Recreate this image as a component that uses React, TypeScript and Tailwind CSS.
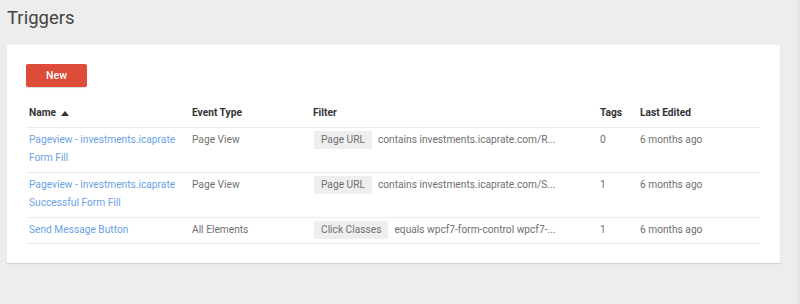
import React from "react";

interface TriggerRow {
  name: string[];
  eventType: string;
  chip: string;
  filter: string;
  tags: number;
  edited: string;
}

const rows: TriggerRow[] = [
  {
    name: ["Pageview - investments.icaprate", "Form Fill"],
    eventType: "Page View",
    chip: "Page URL",
    filter: "contains investments.icaprate.com/R...",
    tags: 0,
    edited: "6 months ago",
  },
  {
    name: ["Pageview - investments.icaprate", "Successful Form Fill"],
    eventType: "Page View",
    chip: "Page URL",
    filter: "contains investments.icaprate.com/S...",
    tags: 1,
    edited: "6 months ago",
  },
  {
    name: ["Send Message Button"],
    eventType: "All Elements",
    chip: "Click Classes",
    filter: "equals wpcf7-form-control wpcf7-...",
    tags: 1,
    edited: "6 months ago",
  },
];

const App: React.FC = () => {
  return (
    <div
      className="w-[800px] h-[304px] bg-[#ededed] relative overflow-hidden"
      style={{ fontFamily: 'Roboto, "Liberation Sans", sans-serif' }}
    >
      {/* Titre */}
      <h1 className="pl-[7px] pt-[4px] h-[45px] text-[18.5px] leading-[28px] text-[#444] font-normal">
        Triggers
      </h1>

      {/* Carte */}
      <div className="ml-[7px] w-[773px] h-[218px] bg-white shadow-[0_1px_1px_rgba(0,0,0,0.12)] pt-[17px] pl-[19px] pr-[20px]">
        <button className="w-[61px] h-[23px] bg-[#dd4b39] text-white text-[10.5px] font-medium rounded-[2px] shadow-[0_1px_1px_rgba(0,0,0,0.15)]">
          New
        </button>

        <table className="mt-[14px] w-[734px] table-fixed border-collapse text-[10.2px] leading-[18.5px]">
          <colgroup>
            <col className="w-[163px]" />
            <col className="w-[121px]" />
            <col className="w-[287px]" />
            <col className="w-[40px]" />
            <col className="w-[123px]" />
          </colgroup>
          <thead>
            <tr className="h-[26px] border-b border-[#ececec] text-left text-[#333] font-bold">
              <th className="pl-[3px] pb-[2px] font-bold">
                <span className="inline-flex items-center gap-[5px]">
                  Name
                  <svg width="8" height="5" viewBox="0 0 8 5">
                    <path d="M0 5 L4 0 L8 5 Z" fill="#333" />
                  </svg>
                </span>
              </th>
              <th className="pl-[3px] pb-[2px] font-bold">Event Type</th>
              <th className="pl-[3px] pb-[2px] font-bold">Filter</th>
              <th className="pl-[3px] pb-[2px] font-bold">Tags</th>
              <th className="pl-[3px] pb-[2px] font-bold">Last Edited</th>
            </tr>
          </thead>
          <tbody>
            {rows.map((row, i) => (
              <tr key={i} className="border-b border-[#ececec] align-top text-[#707070]">
                <td className="pl-[3px] pt-[3px] pb-[4px] text-[#6a9fe8]">
                  {row.name.map((line, j) => (
                    <div key={j}>{line}</div>
                  ))}
                </td>
                <td className="pl-[3px] pt-[3px] pb-[4px]">{row.eventType}</td>
                <td className="pl-[4px] pt-[3px] pb-[4px] whitespace-nowrap">
                  <span className="inline-block bg-[#eeeeee] px-[7px] rounded-[2px] text-[#707070]">
                    {row.chip}
                  </span>
                  <span className="ml-[6px]">{row.filter}</span>
                </td>
                <td className="pl-[3px] pt-[3px] pb-[4px]">{row.tags}</td>
                <td className="pl-[3px] pt-[3px] pb-[4px]">{row.edited}</td>
              </tr>
            ))}
          </tbody>
        </table>
      </div>

      {/* Bord de la barre de défilement */}
      <div className="absolute top-0 right-0 w-[3px] h-full bg-[#e6e6e6]" />
    </div>
  );
};

export default App;
